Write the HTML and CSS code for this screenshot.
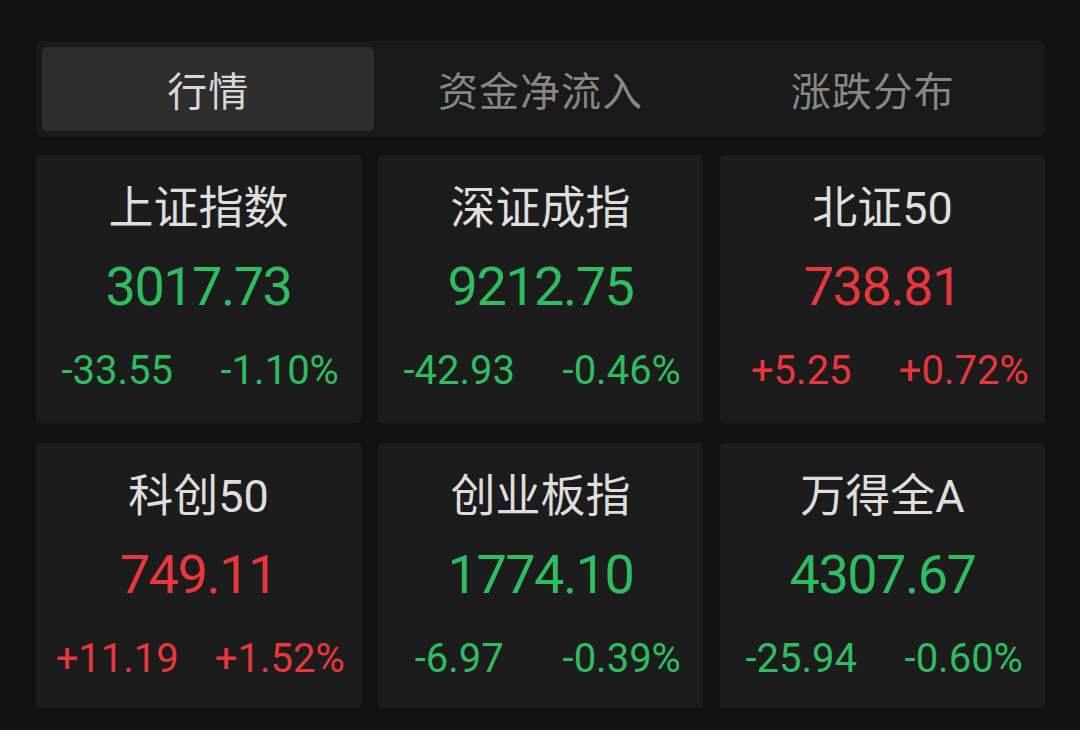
FILE: index.html
```html
<!DOCTYPE html>
<html lang="zh-CN">
<head>
<meta charset="utf-8">
<title>行情</title>
<link rel="stylesheet" href="styles.css">
</head>
<body>
<div class="page">
  <div class="tabs">
    <div class="tab active">行情</div>
    <div class="tab">资金净流入</div>
    <div class="tab">涨跌分布</div>
  </div>
  <div class="grid">
    <div class="card">
      <div class="name">上证指数</div>
      <div class="price down">3017.73</div>
      <div class="chg down"><span>-33.55</span><span>-1.10%</span></div>
    </div>
    <div class="card">
      <div class="name">深证成指</div>
      <div class="price down">9212.75</div>
      <div class="chg down"><span>-42.93</span><span>-0.46%</span></div>
    </div>
    <div class="card">
      <div class="name">北证50</div>
      <div class="price up">738.81</div>
      <div class="chg up"><span>+5.25</span><span>+0.72%</span></div>
    </div>
    <div class="card">
      <div class="name">科创50</div>
      <div class="price up">749.11</div>
      <div class="chg up"><span>+11.19</span><span>+1.52%</span></div>
    </div>
    <div class="card">
      <div class="name">创业板指</div>
      <div class="price down">1774.10</div>
      <div class="chg down"><span>-6.97</span><span>-0.39%</span></div>
    </div>
    <div class="card">
      <div class="name">万得全A</div>
      <div class="price down">4307.67</div>
      <div class="chg down"><span>-25.94</span><span>-0.60%</span></div>
    </div>
  </div>
</div>
</body>
</html>
```
FILE: styles.css
```css
html, body {
  margin: 0;
  padding: 0;
  background: #121212;
}
body {
  width: 1080px;
  height: 730px;
  overflow: hidden;
  font-family: Roboto, "Noto Sans CJK SC", sans-serif;
}
.page {
  padding: 41px 0 0 36px;
  width: 1009px;
}
.tabs {
  display: flex;
  height: 96px;
  box-sizing: border-box;
  padding: 6px;
  background: #1a1a1a;
  border-radius: 6px;
}
.tab {
  flex: 1;
  display: flex;
  align-items: center;
  justify-content: center;
  font-family: "Noto Sans CJK SC", sans-serif;
  font-size: 40px;
  color: #878787;
  border-radius: 5px;
  letter-spacing: 1px;
}
.tab.active {
  background: #2e2e2e;
  color: #d8d8d8;
}
.grid {
  margin-top: 18px;
  display: grid;
  grid-template-columns: repeat(3, 325px);
  grid-template-rows: 268px 265px;
  column-gap: 17px;
  row-gap: 20px;
}
.card {
  background: #1c1c1c;
  border-radius: 4px;
  display: flex;
  flex-direction: column;
  align-items: center;
  padding-top: 26px;
  box-sizing: border-box;
}
.name {
  font-family: Roboto, "Noto Sans CJK SC", sans-serif;
  font-size: 45px;
  line-height: 56px;
  color: #dedede;
}
.price {
  margin-top: 18px;
  font-size: 54px;
  line-height: 64px;
  letter-spacing: -1.5px;
}
.chg {
  margin-top: 28px;
  width: 100%;
  display: grid;
  grid-template-columns: 1fr 1fr;
  font-size: 40px;
  line-height: 48px;
  letter-spacing: 0;
}
.chg span {
  text-align: center;
}
.down { color: #2ebd5f; }
.up { color: #e8373d; }
```
